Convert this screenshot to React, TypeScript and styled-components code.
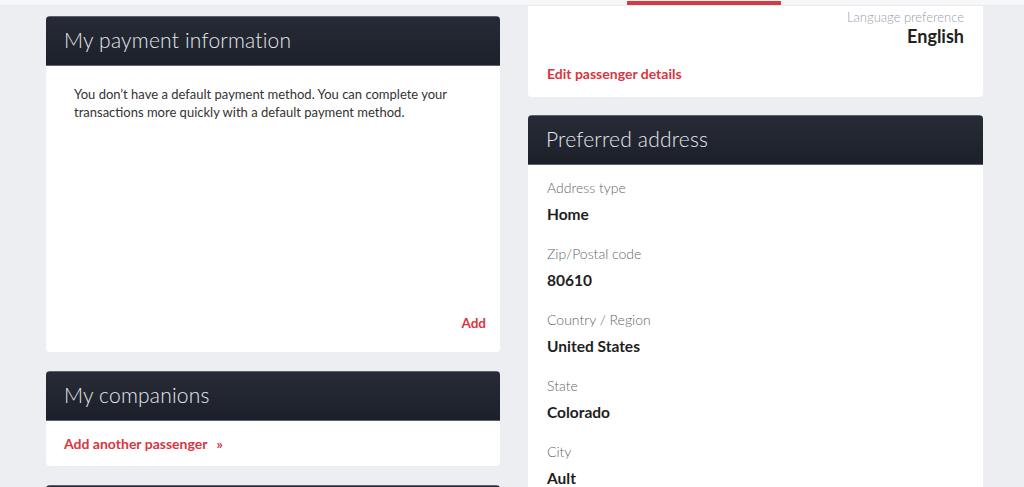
import React from "react";
import styled, { createGlobalStyle } from "styled-components";

const GlobalStyle = createGlobalStyle`
  html, body {
    margin: 0;
    padding: 0;
    background: #eceef1;
    font-family: Lato, "Open Sans", Arial, sans-serif;
    color: #222;
  }
`;

const TopBar = styled.div`
  display: flex;
  align-items: flex-end;
  height: 5px;
  background: #f6f7f9;
  border-bottom: 1px solid #e8eaee;
`;

const ActiveTab = styled.div`
  margin-left: 627px;
  width: 154px;
  height: 4px;
  background: #d93a42;
`;

const Columns = styled.div`
  display: grid;
  grid-template-columns: 454px 455px;
  column-gap: 28px;
  padding: 0 41px 0 46px;
  align-items: start;
`;

const Column = styled.div<{ $top: number; $gap: number }>`
  display: flex;
  flex-direction: column;
  gap: ${(p) => p.$gap}px;
  padding-top: ${(p) => p.$top}px;
`;

const Card = styled.section<{ $cut?: boolean }>`
  background: #fff;
  border-radius: ${(p) => (p.$cut ? "0 0 4px 4px" : "4px")};
  overflow: hidden;
`;

const CardHeader = styled.h2`
  margin: 0;
  height: 50px;
  box-sizing: border-box;
  display: flex;
  align-items: center;
  padding: 0 18px 3px;
  background: linear-gradient(180deg, #262b37 0%, #1c2029 100%);
  border-top: 1px solid #5c616c;
  border-bottom: 1px solid #5c616c;
  color: #e6e7ea;
  font-family: Lato, "Open Sans", sans-serif;
  font-weight: 300;
  font-size: 21px;
  letter-spacing: 0.2px;
`;

const PaymentBody = styled.div`
  height: 286px;
  box-sizing: border-box;
  display: flex;
  flex-direction: column;
  justify-content: space-between;
  padding: 19px 14px 21px 28px;
`;

const Text = styled.p`
  margin: 0;
  font-size: 13px;
  line-height: 18px;
  color: #333;
`;

const RedLink = styled.a<{ $align?: string; $size?: number }>`
  display: block;
  color: #dc3440;
  font-weight: 700;
  font-size: ${(p) => p.$size || 14}px;
  text-decoration: none;
  text-align: ${(p) => p.$align || "left"};
  cursor: pointer;
`;

const Chevrons = styled.span`
  margin-left: 9px;
  font-size: 14px;
`;

const LinkBody = styled.div`
  height: 45px;
  box-sizing: border-box;
  display: flex;
  align-items: center;
  padding: 0 18px;
`;

const PassengerBody = styled.div`
  height: 91px;
  box-sizing: border-box;
  display: flex;
  flex-direction: column;
  padding: 3px 19px 0 19px;
`;

const Preference = styled.div`
  display: flex;
  flex-direction: column;
  align-items: flex-end;
`;

const PrefLabel = styled.span`
  font-size: 13px;
  font-weight: 300;
  color: #9aa0ab;
  line-height: 16px;
`;

const PrefValue = styled.span`
  font-size: 18px;
  font-weight: 700;
  color: #222;
  line-height: 22px;
`;

const EditRow = styled.div`
  margin-top: 18px;
`;

const AddressBody = styled.div`
  display: flex;
  flex-direction: column;
  padding: 14px 19px 0 19px;
`;

const Field = styled.div`
  display: flex;
  flex-direction: column;
  gap: 8px;
  height: 66px;
`;

const FieldLabel = styled.span`
  font-size: 14px;
  font-weight: 300;
  color: #666;
  line-height: 18px;
`;

const FieldValue = styled.span`
  font-size: 15.5px;
  font-weight: 700;
  color: #1e1e1e;
  line-height: 18px;
`;

const address = [
  ["Address type", "Home"],
  ["Zip/Postal code", "80610"],
  ["Country / Region", "United States"],
  ["State", "Colorado"],
  ["City", "Ault"],
];

export default function App() {
  return (
    <>
      <GlobalStyle />
      <TopBar>
        <ActiveTab />
      </TopBar>
      <Columns>
        <Column $top={10} $gap={19}>
          <Card>
            <CardHeader>My payment information</CardHeader>
            <PaymentBody>
              <Text>
                You don’t have a default payment method. You can complete your
                transactions more quickly with a default payment method.
              </Text>
              <RedLink $align="right" $size={13.5}>
                Add
              </RedLink>
            </PaymentBody>
          </Card>
          <Card>
            <CardHeader>My companions</CardHeader>
            <LinkBody>
              <RedLink>
                Add another passenger<Chevrons>»</Chevrons>
              </RedLink>
            </LinkBody>
          </Card>
          <Card>
            <CardHeader />
          </Card>
        </Column>
        <Column $top={0} $gap={18}>
          <Card $cut>
            <PassengerBody>
              <Preference>
                <PrefLabel>Language preference</PrefLabel>
                <PrefValue>English</PrefValue>
              </Preference>
              <EditRow>
                <RedLink>Edit passenger details</RedLink>
              </EditRow>
            </PassengerBody>
          </Card>
          <Card>
            <CardHeader>Preferred address</CardHeader>
            <AddressBody>
              {address.map(([label, value]) => (
                <Field key={label}>
                  <FieldLabel>{label}</FieldLabel>
                  <FieldValue>{value}</FieldValue>
                </Field>
              ))}
            </AddressBody>
          </Card>
        </Column>
      </Columns>
    </>
  );
}
